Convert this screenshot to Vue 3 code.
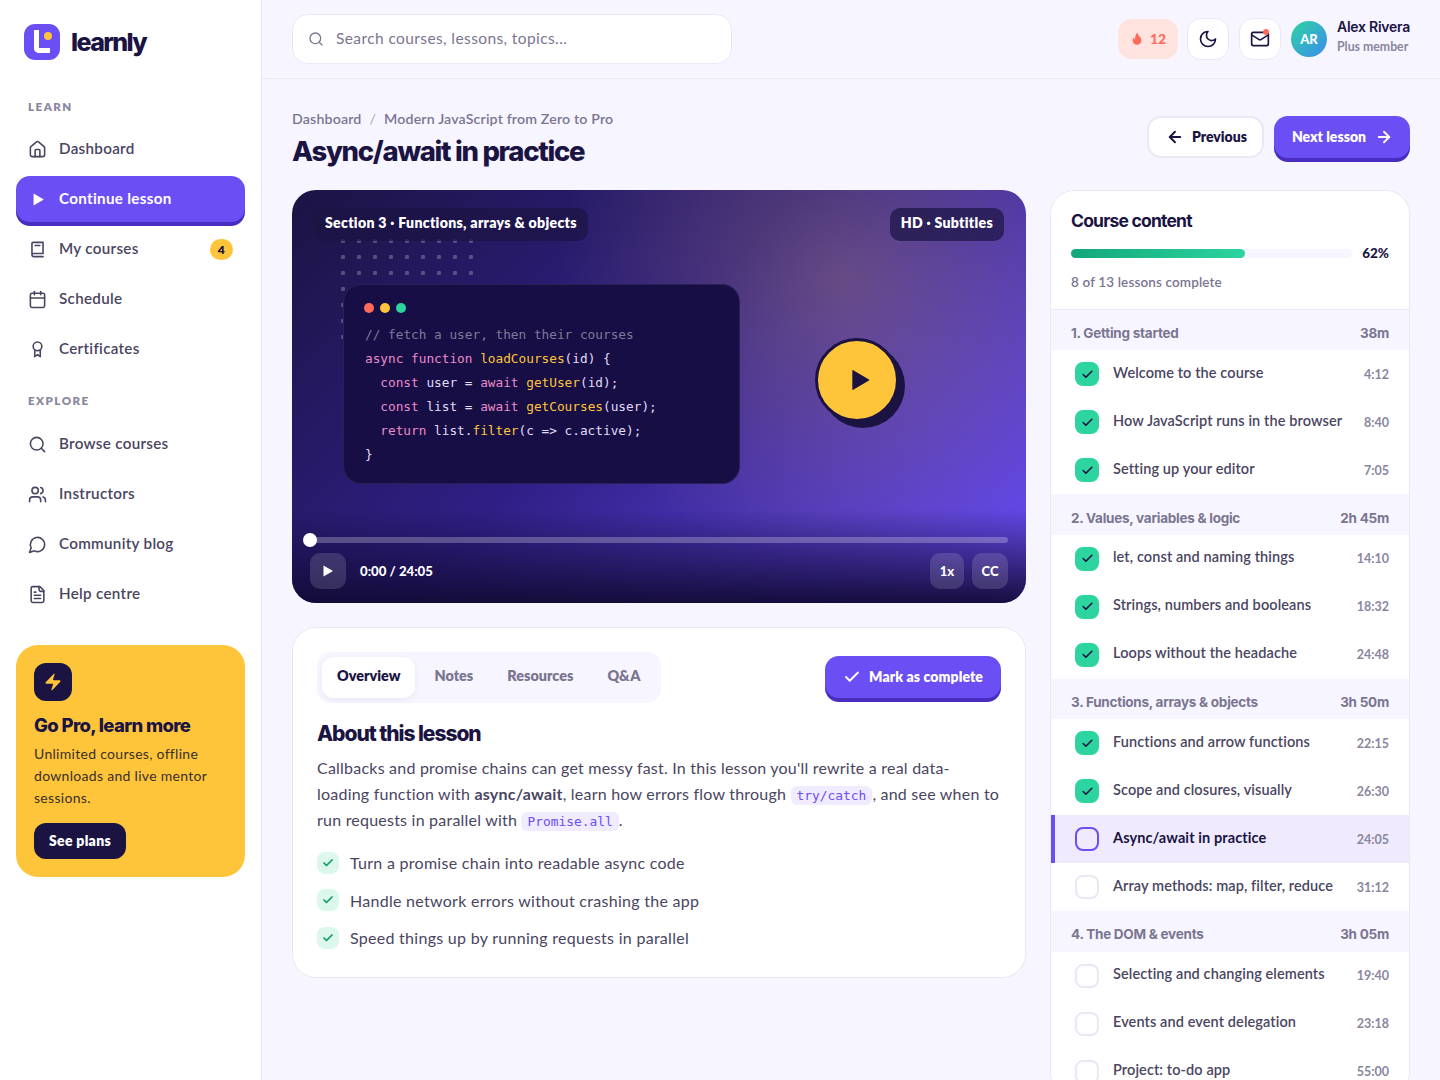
<script setup>
const icons = {
  home: ['M15 21v-8a1 1 0 0 0-1-1h-4a1 1 0 0 0-1 1v8', 'M3 10a2 2 0 0 1 .709-1.528l7-5.999a2 2 0 0 1 2.582 0l7 5.999A2 2 0 0 1 21 10v9a2 2 0 0 1-2 2H5a2 2 0 0 1-2-2z'],
  book: ['M5 18V4.5A1.5 1.5 0 0 1 6.5 3H19v14H7a2 2 0 0 0-2 2 2 2 0 0 0 2 2h12', 'M9 7h6'],
  calendar: ['M8 2v4', 'M16 2v4', 'M5 4h14a2 2 0 0 1 2 2v14a2 2 0 0 1-2 2H5a2 2 0 0 1-2-2V6a2 2 0 0 1 2-2z', 'M3 10h18'],
  award: ['M12 2.5a5.5 5.5 0 1 0 0 11 5.5 5.5 0 0 0 0-11z', 'M8.5 13v8l3.5-2.5 3.5 2.5v-8'],
  search: ['M11 3a8 8 0 1 0 0 16 8 8 0 0 0 0-16z', 'm21 21-4.3-4.3'],
  users: ['M16 21v-2a4 4 0 0 0-4-4H6a4 4 0 0 0-4 4v2', 'M9 3a4 4 0 1 0 0 8 4 4 0 0 0 0-8z', 'M22 21v-2a4 4 0 0 0-3-3.87', 'M16 3.13a4 4 0 0 1 0 7.75'],
  message: ['M7.9 20A9 9 0 1 0 4 16.1L2 22Z'],
  file: ['M15 2H6a2 2 0 0 0-2 2v16a2 2 0 0 0 2 2h12a2 2 0 0 0 2-2V7Z', 'M14 2v4a2 2 0 0 0 2 2h4', 'M10 9H8', 'M16 13H8', 'M16 17H8'],
}

const learnNav = [
  { label: 'Dashboard', icon: 'home' },
  { label: 'Continue lesson', active: true },
  { label: 'My courses', icon: 'book', badge: 4 },
  { label: 'Schedule', icon: 'calendar' },
  { label: 'Certificates', icon: 'award' },
]

const exploreNav = [
  { label: 'Browse courses', icon: 'search' },
  { label: 'Instructors', icon: 'users' },
  { label: 'Community blog', icon: 'message' },
  { label: 'Help centre', icon: 'file' },
]

const tabs = ['Overview', 'Notes', 'Resources', 'Q&A']

const points = [
  'Turn a promise chain into readable async code',
  'Handle network errors without crashing the app',
  'Speed things up by running requests in parallel',
]

const sections = [
  {
    title: '1. Getting started',
    time: '38m',
    lessons: [
      { name: 'Welcome to the course', time: '4:12', done: true },
      { name: 'How JavaScript runs in the browser', time: '8:40', done: true },
      { name: 'Setting up your editor', time: '7:05', done: true },
    ],
  },
  {
    title: '2. Values, variables & logic',
    time: '2h 45m',
    lessons: [
      { name: 'let, const and naming things', time: '14:10', done: true },
      { name: 'Strings, numbers and booleans', time: '18:32', done: true },
      { name: 'Loops without the headache', time: '24:48', done: true },
    ],
  },
  {
    title: '3. Functions, arrays & objects',
    time: '3h 50m',
    lessons: [
      { name: 'Functions and arrow functions', time: '22:15', done: true },
      { name: 'Scope and closures, visually', time: '26:30', done: true },
      { name: 'Async/await in practice', time: '24:05', current: true },
      { name: 'Array methods: map, filter, reduce', time: '31:12' },
    ],
  },
  {
    title: '4. The DOM & events',
    time: '3h 05m',
    lessons: [
      { name: 'Selecting and changing elements', time: '19:40' },
      { name: 'Events and event delegation', time: '23:18' },
      { name: 'Project: to-do app', time: '55:00' },
    ],
  },
]
</script>

<template>
  <div class="app">
    <aside class="sidebar">
      <div class="brand">
        <div class="logo">
          <span class="logo-l"></span>
          <span class="logo-dot"></span>
        </div>
        <span class="brand-name">learnly</span>
      </div>

      <p class="nav-label">LEARN</p>
      <nav class="nav">
        <a v-for="item in learnNav" :key="item.label" class="nav-item" :class="{ active: item.active }">
          <svg v-if="item.active" class="nav-icon" viewBox="0 0 24 24" fill="#fff"><path d="M7 4.5v15l13-7.5z" /></svg>
          <svg v-else class="nav-icon" viewBox="0 0 24 24" fill="none" stroke="currentColor" stroke-width="2" stroke-linecap="round" stroke-linejoin="round">
            <path v-for="d in icons[item.icon]" :key="d" :d="d" />
          </svg>
          <span class="nav-text">{{ item.label }}</span>
          <span v-if="item.badge" class="nav-badge">{{ item.badge }}</span>
        </a>
      </nav>

      <p class="nav-label explore">EXPLORE</p>
      <nav class="nav">
        <a v-for="item in exploreNav" :key="item.label" class="nav-item">
          <svg class="nav-icon" viewBox="0 0 24 24" fill="none" stroke="currentColor" stroke-width="2" stroke-linecap="round" stroke-linejoin="round">
            <path v-for="d in icons[item.icon]" :key="d" :d="d" />
          </svg>
          <span class="nav-text">{{ item.label }}</span>
        </a>
      </nav>

      <div class="promo">
        <div class="promo-icon">
          <svg width="20" height="20" viewBox="0 0 24 24" fill="#ffc53a"><path d="M4 14a1 1 0 0 1-.78-1.63l9.9-10.2a.5.5 0 0 1 .86.46l-1.92 6.02A1 1 0 0 0 13 10h7a1 1 0 0 1 .78 1.63l-9.9 10.2a.5.5 0 0 1-.86-.46l1.92-6.02A1 1 0 0 0 11 14z" /></svg>
        </div>
        <h3>Go Pro, learn more</h3>
        <p>Unlimited courses, offline downloads and live mentor sessions.</p>
        <button class="promo-btn">See plans</button>
      </div>
    </aside>

    <div class="main">
      <header class="topbar">
        <div class="search">
          <svg width="16" height="16" viewBox="0 0 24 24" fill="none" stroke="#7a7591" stroke-width="2" stroke-linecap="round" stroke-linejoin="round">
            <path v-for="d in icons.search" :key="d" :d="d" />
          </svg>
          <span>Search courses, lessons, topics...</span>
        </div>
        <div class="top-actions">
          <div class="streak">
            <svg width="14" height="14" viewBox="0 0 24 24" fill="#ff6b5b"><path d="M12.5 1c.6 3.4 2.2 5 3.9 6.9 1.7 1.9 3.1 4 3.1 6.6a7.5 7.5 0 0 1-15 0c0-2 .8-3.6 2-4.9.3 1.6 1 2.6 2.2 3.1-.3-4.4 1-8.4 3.8-11.7z" /></svg>
            <span>12</span>
          </div>
          <button class="icon-btn">
            <svg width="20" height="20" viewBox="0 0 24 24" fill="none" stroke="#1b1443" stroke-width="2" stroke-linecap="round" stroke-linejoin="round"><path d="M12 3a6 6 0 0 0 9 9 9 9 0 1 1-9-9Z" /></svg>
          </button>
          <button class="icon-btn">
            <svg width="20" height="20" viewBox="0 0 24 24" fill="none" stroke="#1b1443" stroke-width="2" stroke-linecap="round" stroke-linejoin="round"><path d="M4 4h16a2 2 0 0 1 2 2v12a2 2 0 0 1-2 2H4a2 2 0 0 1-2-2V6a2 2 0 0 1 2-2z" /><path d="m22 7-8.97 5.7a1.94 1.94 0 0 1-2.06 0L2 7" /></svg>
            <span class="mail-dot"></span>
          </button>
          <div class="user">
            <div class="avatar">AR</div>
            <div class="user-text">
              <strong>Alex Rivera</strong>
              <span>Plus member</span>
            </div>
          </div>
        </div>
      </header>

      <div class="content">
        <div class="page-head">
          <div>
            <div class="crumbs">
              <span>Dashboard</span>
              <span class="sep">/</span>
              <span>Modern JavaScript from Zero to Pro</span>
            </div>
            <h1>Async/await in practice</h1>
          </div>
          <div class="head-actions">
            <button class="btn-ghost">
              <svg width="18" height="18" viewBox="0 0 24 24" fill="none" stroke="currentColor" stroke-width="2.5" stroke-linecap="round" stroke-linejoin="round"><path d="M19 12H5" /><path d="m12 19-7-7 7-7" /></svg>
              Previous
            </button>
            <button class="btn-primary next">
              Next lesson
              <svg width="18" height="18" viewBox="0 0 24 24" fill="none" stroke="currentColor" stroke-width="2.5" stroke-linecap="round" stroke-linejoin="round"><path d="M5 12h14" /><path d="m12 5 7 7-7 7" /></svg>
            </button>
          </div>
        </div>

        <div class="grid">
          <div class="left-col">
            <div class="player">
              <div class="dots-bg"></div>
              <div class="tag tag-left">Section 3 · Functions, arrays &amp; objects</div>
              <div class="tag tag-right">HD · Subtitles</div>

              <div class="code-card">
                <div class="traffic"><i class="r"></i><i class="y"></i><i class="g"></i></div>
                <div class="code">
                  <div class="c">// fetch a user, then their courses</div>
                  <div><span class="k">async function</span> <span class="f">loadCourses</span>(id) {</div>
                  <div class="in"><span class="k">const</span> user = <span class="k">await</span> <span class="f">getUser</span>(id);</div>
                  <div class="in"><span class="k">const</span> list = <span class="k">await</span> <span class="f">getCourses</span>(user);</div>
                  <div class="in"><span class="k">return</span> list.<span class="f">filter</span>(c =&gt; c.active);</div>
                  <div>}</div>
                </div>
              </div>

              <button class="big-play">
                <svg width="28" height="28" viewBox="0 0 24 24" fill="#1b1443" stroke="#1b1443" stroke-width="1" stroke-linejoin="round"><path d="M8.5 4v16L22 12z" /></svg>
              </button>

              <div class="controls">
                <div class="track"><span class="thumb"></span></div>
                <div class="ctrl-row">
                  <button class="ctrl-btn play">
                    <svg width="12" height="12" viewBox="0 0 24 24" fill="#fff"><path d="M3 1v22l19-11z" /></svg>
                  </button>
                  <span class="time">0:00 / 24:05</span>
                  <button class="ctrl-btn speed">1x</button>
                  <button class="ctrl-btn">CC</button>
                </div>
              </div>
            </div>

            <section class="lesson-card">
              <div class="lesson-top">
                <div class="tabs">
                  <button v-for="(t, i) in tabs" :key="t" class="tab" :class="{ on: i === 0 }">{{ t }}</button>
                </div>
                <button class="btn-primary mark">
                  <svg width="18" height="18" viewBox="0 0 24 24" fill="none" stroke="currentColor" stroke-width="2.5" stroke-linecap="round" stroke-linejoin="round"><path d="M20 6 9 17l-5-5" /></svg>
                  Mark as complete
                </button>
              </div>
              <h2>About this lesson</h2>
              <p class="about">
                Callbacks and promise chains can get messy fast. In this lesson you'll rewrite a real data-loading function with <b>async/await</b>, learn how errors flow through <code>try/catch</code>, and see when to run requests in parallel with <code>Promise.all</code>.
              </p>
              <ul class="points">
                <li v-for="p in points" :key="p">
                  <span class="tick">
                    <svg width="12" height="12" viewBox="0 0 24 24" fill="none" stroke="#0d9b6c" stroke-width="3.5" stroke-linecap="round" stroke-linejoin="round"><path d="M20 6 9 17l-5-5" /></svg>
                  </span>
                  {{ p }}
                </li>
              </ul>
            </section>
          </div>

          <aside class="panel">
            <div class="panel-head">
              <h3>Course content</h3>
              <div class="progress-row">
                <div class="progress"><div class="progress-fill" :style="{ width: '62%' }"></div></div>
                <strong>62%</strong>
              </div>
              <p>8 of 13 lessons complete</p>
            </div>
            <template v-for="s in sections" :key="s.title">
              <div class="section-head">
                <span>{{ s.title }}</span>
                <span>{{ s.time }}</span>
              </div>
              <div v-for="l in s.lessons" :key="l.name" class="lesson" :class="{ current: l.current }">
                <span class="box" :class="{ done: l.done }">
                  <svg v-if="l.done" width="13" height="13" viewBox="0 0 24 24" fill="none" stroke="#1b1443" stroke-width="3" stroke-linecap="round" stroke-linejoin="round"><path d="M20 6 9 17l-5-5" /></svg>
                </span>
                <span class="lesson-name">{{ l.name }}</span>
                <span class="lesson-time">{{ l.time }}</span>
              </div>
            </template>
          </aside>
        </div>
      </div>
    </div>
  </div>
</template>

<style>
html,
body {
  margin: 0;
  background: #f7f5ff;
}
</style>

<style scoped>
.app {
  display: flex;
  height: 100vh;
  overflow: hidden;
  font-family: 'Lato', 'Liberation Sans', sans-serif;
  color: #4a4560;
  background: #f7f5ff;
}

button {
  font-family: inherit;
  border: none;
  cursor: pointer;
}

/* sidebar */
.sidebar {
  flex: none;
  width: 262px;
  box-sizing: border-box;
  padding: 24px 16px;
  background: #fff;
  border-right: 1px solid #ebe8f5;
}

.brand {
  display: flex;
  align-items: center;
  gap: 11px;
  padding-left: 8px;
  margin-bottom: 39px;
}

.logo {
  position: relative;
  width: 36px;
  height: 36px;
  border-radius: 11px;
  background: #6c4ef5;
}

.logo-l {
  position: absolute;
  left: 10px;
  top: 6px;
  width: 16px;
  height: 23px;
  box-sizing: border-box;
  border-left: 5px solid #fff;
  border-bottom: 5px solid #fff;
  border-bottom-left-radius: 5px;
}

.logo-dot {
  position: absolute;
  left: 20px;
  top: 8px;
  width: 8px;
  height: 8px;
  border-radius: 50%;
  background: #ffc53a;
}

.brand-name {
  font-family: 'Inter', sans-serif;
  font-size: 25px;
  font-weight: 800;
  letter-spacing: -1.6px;
  color: #1b1443;
}

.nav-label {
  margin: 0 0 12px 12px;
  font-size: 11.5px;
  line-height: 15px;
  font-weight: 800;
  letter-spacing: 1.5px;
  color: #8a86a0;
}

.nav-label.explore {
  margin-top: 21px;
  margin-bottom: 13px;
}

.nav {
  display: flex;
  flex-direction: column;
  gap: 4px;
}

.nav-item {
  display: flex;
  align-items: center;
  gap: 11px;
  height: 46px;
  padding: 0 12px;
  border-radius: 14px;
  font-size: 15.2px;
  font-weight: 600;
  letter-spacing: 0.3px;
  color: #4a4560;
}

.nav-item.active {
  background: #6c4ef5;
  color: #fff;
  font-weight: 700;
  box-shadow: 0 4px 0 #4a2dc0;
}

.nav-text {
  margin-top: -2px;
}

.nav-icon {
  width: 19px;
  height: 19px;
  margin-right: 1px;
  flex: none;
}

.nav-badge {
  margin-left: auto;
  width: 23px;
  height: 21px;
  border-radius: 11px;
  background: #ffc53a;
  color: #1b1443;
  font-size: 12px;
  font-weight: 800;
  line-height: 21px;
  text-align: center;
}

.promo {
  margin-top: 28px;
  padding: 18px;
  border-radius: 22px;
  background: #ffc53a;
  color: #3a2f2a;
}

.promo-icon {
  display: flex;
  align-items: center;
  justify-content: center;
  width: 38px;
  height: 38px;
  border-radius: 12px;
  background: #1b1443;
}

.promo h3 {
  margin: 12px 0 6px;
  font-family: 'Inter', sans-serif;
  font-size: 18.5px;
  line-height: 24px;
  font-weight: 800;
  letter-spacing: -0.65px;
  color: #1b1443;
}

.promo p {
  margin: 0 0 14px;
  font-size: 14px;
  line-height: 22px;
  letter-spacing: 0.3px;
}

.promo-btn {
  display: block;
  width: 92px;
  height: 36px;
  padding: 0 0 2px;
  border-radius: 12px;
  background: #1b1443;
  color: #fff;
  font-size: 14px;
  font-weight: 800;
  letter-spacing: 0.3px;
}

/* top bar */
.main {
  flex: 1;
  min-width: 0;
  display: flex;
  flex-direction: column;
}

.topbar {
  flex: none;
  height: 79px;
  box-sizing: border-box;
  padding: 0 30px;
  display: flex;
  align-items: center;
  justify-content: space-between;
  border-bottom: 1px solid #ebe8f5;
}

.search {
  display: flex;
  align-items: center;
  gap: 12px;
  width: 440px;
  height: 50px;
  box-sizing: border-box;
  padding: 0 15px;
  margin-top: -1px;
  background: #fff;
  border: 1px solid #ebe8f5;
  border-radius: 16px;
  font-size: 15.5px;
  letter-spacing: 0.4px;
  color: #7a7591;
}

.search span {
  margin-top: -2px;
}

.top-actions {
  display: flex;
  align-items: center;
  gap: 10px;
  margin-top: -1px;
}

.streak {
  display: flex;
  align-items: center;
  justify-content: center;
  gap: 6px;
  width: 60px;
  height: 40px;
  margin-right: -1px;
  border-radius: 14px;
  background: #ffe3de;
  color: #ff6b5b;
  font-size: 14px;
  font-weight: 900;
}

.icon-btn {
  position: relative;
  display: flex;
  align-items: center;
  justify-content: center;
  width: 42px;
  height: 42px;
  padding: 0;
  background: #fff;
  border: 1px solid #ebe8f5;
  border-radius: 14px;
}

.mail-dot {
  position: absolute;
  top: 10px;
  right: 11px;
  width: 6px;
  height: 6px;
  border-radius: 50%;
  background: #ff6b5b;
}

.user {
  display: flex;
  align-items: center;
  gap: 10px;
}

.avatar {
  display: flex;
  align-items: center;
  justify-content: center;
  width: 36px;
  height: 36px;
  border-radius: 50%;
  background: linear-gradient(135deg, #2dd4a0, #3b8bf0);
  color: #fff;
  font-size: 13px;
  font-weight: 900;
}

.user-text {
  display: flex;
  flex-direction: column;
  gap: 3px;
  width: 73px;
  margin-bottom: 5px;
}

.user-text strong {
  font-family: 'Inter', sans-serif;
  font-size: 14px;
  line-height: 18px;
  font-weight: 600;
  letter-spacing: -0.25px;
  color: #1b1443;
  white-space: nowrap;
}

.user-text span {
  font-size: 12.3px;
  line-height: 16px;
  font-weight: 700;
  color: #8a86a0;
  white-space: nowrap;
}

/* page */
.content {
  padding: 30px 30px 0;
}

.page-head {
  display: flex;
  align-items: flex-start;
  justify-content: space-between;
  margin-bottom: 20px;
}

.crumbs {
  display: flex;
  gap: 8px;
  height: 20px;
  margin-bottom: 4px;
  font-size: 14.2px;
  line-height: 20px;
  font-weight: 600;
  letter-spacing: 0.15px;
  color: #7a7591;
}

.crumbs .sep {
  font-weight: 400;
  color: #a9a5bd;
}

h1 {
  margin: 0 0 1px;
  font-family: 'Inter', sans-serif;
  font-size: 27.5px;
  line-height: 36px;
  font-weight: 800;
  letter-spacing: -1.3px;
  color: #1b1443;
}

.head-actions {
  display: flex;
  align-items: flex-start;
  gap: 10px;
  height: 46px;
  margin-top: 7px;
}

.btn-ghost {
  display: flex;
  align-items: center;
  gap: 8px;
  height: 42px;
  padding: 0 15px 2px 17px;
  background: #fff;
  border: 2px solid #ebe8f5;
  border-radius: 14px;
  color: #1b1443;
  font-size: 14px;
  font-weight: 800;
}

.btn-primary {
  display: flex;
  align-items: center;
  gap: 9px;
  height: 42px;
  padding: 0 18px 2px;
  background: #6c4ef5;
  border-radius: 14px;
  box-shadow: 0 4px 0 #4a2dc0;
  color: #fff;
  font-size: 14px;
  font-weight: 800;
}

.btn-ghost svg,
.btn-primary svg {
  margin-top: 2px;
}

.btn-primary.next {
  padding-right: 17px;
}

.grid {
  display: grid;
  grid-template-columns: 1fr 360px;
  gap: 24px;
  align-items: start;
}

.left-col {
  display: flex;
  flex-direction: column;
  gap: 24px;
}

/* player */
.player {
  position: relative;
  height: 413px;
  border-radius: 24px;
  overflow: hidden;
  background:
    radial-gradient(circle at 75% 22%, rgba(255, 197, 58, 0.22), transparent 45%),
    linear-gradient(135deg, #1b1443 0%, #2f1f85 45%, #6c4ef5 100%);
}

.dots-bg {
  position: absolute;
  left: 43px;
  top: 43px;
  width: 140px;
  height: 110px;
  background-image: radial-gradient(rgba(255, 255, 255, 0.24) 2px, transparent 2.5px);
  background-size: 16px 16px;
}

.tag {
  position: absolute;
  top: 18px;
  height: 33px;
  padding: 0 11px;
  border-radius: 10px;
  background: rgba(27, 20, 67, 0.7);
  color: #fff;
  font-size: 14.1px;
  line-height: 30px;
  font-weight: 800;
  letter-spacing: 0.3px;
}

.tag-left {
  left: 22px;
}

.tag-right {
  right: 22px;
}

.code-card {
  position: absolute;
  left: 51px;
  top: 94px;
  width: 397px;
  height: 200px;
  box-sizing: border-box;
  padding: 18px 20px 18px 21px;
  border-radius: 18px;
  border: 1px solid rgba(255, 255, 255, 0.08);
  background: #170e45;
}

.traffic {
  display: flex;
  gap: 6px;
  margin-bottom: 10px;
  margin-left: -1px;
}

.traffic i {
  width: 10px;
  height: 10px;
  border-radius: 50%;
}

.traffic .r {
  background: #ff6b5b;
}

.traffic .y {
  background: #ffc53a;
}

.traffic .g {
  background: #2dd4a0;
}

.code {
  font-family: 'DejaVu Sans Mono', monospace;
  font-size: 12.75px;
  line-height: 24px;
  white-space: pre;
  color: #e0dcfa;
}

.code .in {
  padding-left: 2ch;
}

.code .c {
  color: #7f7a9c;
}

.code .k {
  color: #e88bc9;
}

.code .f {
  color: #ffc53a;
}

.big-play {
  position: absolute;
  left: 523px;
  top: 148px;
  display: flex;
  align-items: center;
  justify-content: center;
  width: 84px;
  height: 84px;
  padding: 0;
  border-radius: 50%;
  background: #ffc53a;
  border: 3px solid #1b1443;
  box-shadow: 6px 6px 0 #1b1443;
}

.controls {
  position: absolute;
  left: 0;
  right: 0;
  bottom: 0;
  padding: 28px 18px 14px;
  background: linear-gradient(to bottom, transparent, rgba(18, 10, 53, 0.95));
}

.track {
  position: relative;
  height: 6px;
  margin-bottom: 10px;
  border-radius: 3px;
  background: rgba(255, 255, 255, 0.25);
}

.thumb {
  position: absolute;
  left: -7px;
  top: -4px;
  width: 14px;
  height: 14px;
  border-radius: 50%;
  background: #fff;
}

.ctrl-row {
  display: flex;
  align-items: center;
  gap: 8px;
}

.ctrl-btn {
  display: flex;
  align-items: center;
  justify-content: center;
  width: 36px;
  height: 36px;
  padding: 0;
  border-radius: 10px;
  background: rgba(255, 255, 255, 0.14);
  color: #fff;
  font-size: 13px;
  font-weight: 900;
}

.ctrl-btn.speed {
  width: 34px;
}

.time {
  margin-left: 6px;
  margin-right: auto;
  color: #fff;
  font-size: 13.2px;
  font-weight: 900;
}

/* about card */
.lesson-card {
  padding: 24px 24px 26px;
  background: #fff;
  border: 1px solid #ebe8f5;
  border-radius: 24px;
}

.lesson-top {
  display: flex;
  align-items: center;
  justify-content: space-between;
  margin-bottom: 17px;
}

.tabs {
  display: flex;
  gap: 4px;
  padding: 5px;
  border-radius: 14px;
  background: #f7f5ff;
}

.tab {
  height: 41px;
  padding: 0 15px 4px;
  border-radius: 12px;
  background: transparent;
  color: #7a7591;
  font-size: 14.4px;
  font-weight: 800;
}

.tab.on {
  background: #fff;
  color: #1b1443;
  box-shadow: 0 2px 6px rgba(27, 20, 67, 0.06);
}

.mark {
  margin-top: -1px;
  gap: 8px;
  letter-spacing: 0.1px;
}

h2 {
  margin: 0 0 7px;
  font-family: 'Inter', sans-serif;
  font-size: 21px;
  line-height: 28px;
  font-weight: 800;
  letter-spacing: -1.05px;
  color: #1b1443;
}

.about {
  margin: 0;
  font-size: 16px;
  line-height: 26px;
  letter-spacing: 0.22px;
  color: #4a4560;
}

.about b {
  font-weight: 700;
}

code {
  padding: 2px 6px;
  border-radius: 6px;
  background: #f0ebff;
  color: #6c4ef5;
  font-family: 'DejaVu Sans Mono', monospace;
  font-size: 12.9px;
  line-height: 1;
  letter-spacing: 0;
}

.points {
  list-style: none;
  margin: 17px 0 0;
  padding: 0;
  display: flex;
  flex-direction: column;
  gap: 12px;
}

.points li {
  display: flex;
  align-items: center;
  gap: 11px;
  height: 25.5px;
  font-size: 16px;
  letter-spacing: 0.28px;
  color: #4a4560;
}

.tick {
  display: flex;
  align-items: center;
  justify-content: center;
  width: 22px;
  height: 22px;
  border-radius: 8px;
  background: #dcf8ec;
}

/* course panel */
.panel {
  background: #fff;
  border: 1px solid #ebe8f5;
  border-radius: 24px;
  overflow: hidden;
}

.panel-head {
  height: 119px;
  box-sizing: border-box;
  padding: 18px 20px 0;
  border-bottom: 1px solid #ebe8f5;
}

.panel-head h3 {
  margin: 0 0 12px;
  font-family: 'Inter', sans-serif;
  font-size: 17.5px;
  line-height: 24px;
  font-weight: 700;
  letter-spacing: -0.8px;
  color: #1b1443;
}

.progress-row {
  display: flex;
  align-items: center;
  gap: 10px;
}

.progress {
  flex: 1;
  height: 9px;
  border-radius: 5px;
  background: #f7f5ff;
}

.progress-fill {
  height: 100%;
  border-radius: 5px;
  background: linear-gradient(90deg, #12a77a, #2dd4a0);
}

.progress-row strong {
  font-size: 13.5px;
  font-weight: 900;
  color: #1b1443;
}

.panel-head p {
  margin: 12px 0 0;
  font-size: 13.5px;
  line-height: 18px;
  font-weight: 600;
  letter-spacing: 0.13px;
  color: #7a7591;
}

.section-head {
  display: flex;
  align-items: center;
  justify-content: space-between;
  height: 40.4px;
  box-sizing: border-box;
  padding: 6px 20px 0;
  background: #f7f5ff;
  font-family: 'Inter', sans-serif;
  font-size: 13.5px;
  font-weight: 700;
  letter-spacing: -0.25px;
  color: #7a7591;
}

.lesson {
  display: flex;
  align-items: center;
  height: 48px;
  box-sizing: border-box;
  padding: 0 20px;
  border-left: 4px solid transparent;
  font-size: 14.5px;
  font-weight: 600;
  letter-spacing: 0.1px;
  color: #4a4560;
}

.lesson.current {
  background: #efeafd;
  border-left-color: #6c4ef5;
  color: #1b1443;
  font-weight: 700;
}

.box {
  flex: none;
  display: flex;
  align-items: center;
  justify-content: center;
  width: 24px;
  height: 24px;
  box-sizing: border-box;
  margin-right: 14px;
  border: 2px solid #ebe8f5;
  border-radius: 8px;
}

.box.done {
  background: #2dd4a0;
  border-color: #2dd4a0;
}

.current .box {
  border-color: #6c4ef5;
}

.lesson-name {
  margin-top: -4px;
}

.lesson-time {
  margin-left: auto;
  font-size: 12.5px;
  font-weight: 700;
  letter-spacing: 0;
  color: #8a86a0;
}
</style>
